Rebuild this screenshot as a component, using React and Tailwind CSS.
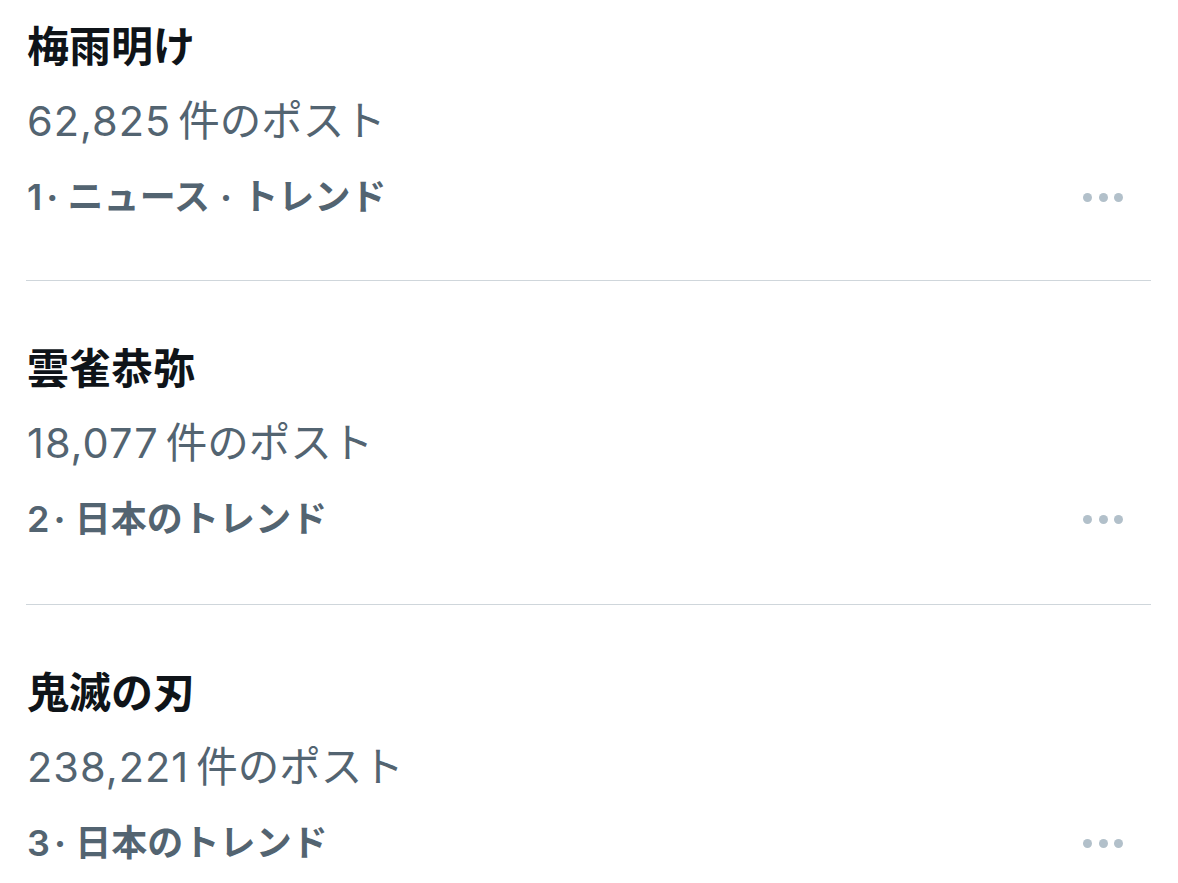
const trends = [
    { title: '梅雨明け', num: '62,825', rank: '1', meta: ['ニュース', 'トレンド'] },
    { title: '雲雀恭弥', num: '18,077', rank: '2', meta: ['日本のトレンド'] },
    { title: '鬼滅の刃', num: '238,221', rank: '3', meta: ['日本のトレンド'] },
];

const latin = { fontFamily: 'Inter, "Noto Sans CJK JP", sans-serif' };

const MoreDots = () => (
    <div className="flex items-center gap-[6.5px] pr-[28px] pt-[4px]">
        <span className="w-[9px] h-[9px] rounded-full bg-[#b2c0ca]" />
        <span className="w-[9px] h-[9px] rounded-full bg-[#b2c0ca]" />
        <span className="w-[9px] h-[9px] rounded-full bg-[#b2c0ca]" />
    </div>
);

const App = () => {
    return (
        <div
            className="w-[1178px] h-[883px] overflow-hidden bg-white pl-[26px] pr-[27px]"
            style={{ fontFamily: '"Noto Sans CJK JP", "Noto Sans", sans-serif' }}
        >
            {trends.map((t, i) => (
                <div
                    key={t.title}
                    className={
                        i === 0
                            ? 'pt-[6px] pb-[49px] border-b border-[#cfd6db]'
                            : 'pt-[47px] pb-[51px] border-b border-[#cfd6db]'
                    }
                >
                    <div className="pl-[1px] h-[75px] leading-[75px] text-[42px] font-bold text-[#0f1419]">
                        {t.title}
                    </div>
                    <div className="pl-[1px] h-[75px] leading-[75px] text-[41.5px] text-[#536471]">
                        <span style={latin} className="pr-[7px] tracking-[1px]">{t.num}</span>
                        件のポスト
                    </div>
                    <div className="flex items-center justify-between h-[75px] pt-[4px]">
                        <span className="pl-[1px] leading-[71px] text-[36px] tracking-[0.1px] font-bold text-[#536471]">
                            <span style={latin} className="font-semibold">{t.rank}</span>
                            <span style={latin} className="pl-[4px] pr-[9px]">·</span>
                            {t.meta[0]}
                            {t.meta[1] && (
                                <>
                                    <span style={latin} className="px-[10px]">·</span>
                                    {t.meta[1]}
                                </>
                            )}
                        </span>
                        <MoreDots />
                    </div>
                </div>
            ))}
        </div>
    );
};

export default App;
